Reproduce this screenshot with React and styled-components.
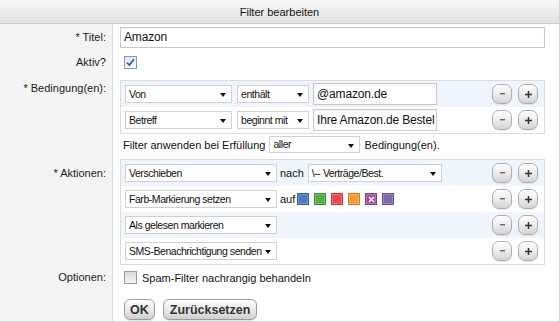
import React from 'react';
import styled, { createGlobalStyle } from 'styled-components';

const Global = createGlobalStyle`
  html, body { margin: 0; padding: 0; background: #fff; }
  body { font-family: "Liberation Sans", Arial, sans-serif; color: #111; }
  * { box-sizing: border-box; }
`;

const Frame = styled.div`
  width: 560px;
  height: 322px;
  border-right: 1px solid #d3d3d3;
  border-bottom: 1px solid #d3d3d3;
  display: flex;
  flex-direction: column;
  overflow: hidden;
`;

const Header = styled.div`
  height: 24px;
  flex: none;
  border-bottom: 1px solid #cdcdcd;
  background: linear-gradient(#f8f8f8, #e2e2e2);
  display: flex;
  align-items: center;
  justify-content: center;
  font-size: 11px;
  color: #111;
`;

const Form = styled.div`
  flex: 1;
  display: grid;
  grid-template-columns: 113px 1fr;
  grid-template-rows: 27px 22px 80px auto 25px 1fr;
`;

const Label = styled.div`
  background: #f4f4f4;
  border-right: 1px solid #dcdcdc;
  font-size: 11px;
  line-height: 13px;
  color: #1a1a1a;
  display: flex;
  justify-content: flex-end;
  align-items: ${p => (p.$top ? 'flex-start' : 'center')};
  padding: ${p => p.$pt || 0}px 6px 0 0;
`;

const Cell = styled.div`
  padding: ${p => p.$pt || 0}px 14px 0 7px;
  display: flex;
  flex-direction: column;
  justify-content: ${p => (p.$center ? 'center' : 'flex-start')};
`;

const TextInput = styled.div`
  height: ${p => p.$h || 21}px;
  width: ${p => (p.$w ? `${p.$w}px` : '100%')};
  flex: none;
  border: 1px solid #c8c8c8;
  box-shadow: inset 0 1px 1px rgba(0, 0, 0, 0.06);
  background: #fff;
  font-size: 12px;
  letter-spacing: -0.15px;
  line-height: ${p => (p.$h || 21) - 2}px;
  padding-left: 3px;
  color: #111;
  white-space: nowrap;
  overflow: hidden;
`;

const Line = styled.div`
  display: flex;
  align-items: center;
  gap: ${p => p.$gap || 0}px;
  margin-left: ${p => p.$ml || 0}px;
  margin-top: ${p => p.$mt || 0}px;
  font-size: 11px;
  color: #111;
`;

const Box = styled.div`
  border: 1px solid #dcdcdc;
  display: flex;
  flex-direction: column;
`;

const BoxRow = styled.div`
  height: 26px;
  display: flex;
  align-items: center;
  padding: 0 6px 0 4px;
  background: ${p => (p.$alt ? '#eef5fd' : '#fff')};
  font-size: 11px;
`;

const Select = styled.div`
  position: relative;
  flex: none;
  width: ${p => p.$w}px;
  height: ${p => p.$h || 18}px;
  margin-right: ${p => p.$mr || 0}px;
  border: 1px solid #d0d0d0;
  background: #fff;
  font-family: "Liberation Sans", Arial, sans-serif;
  font-size: 10.5px;
  letter-spacing: -0.45px;
  line-height: ${p => (p.$h || 18) - 2}px;
  padding-left: 3px;
  color: #111;
  white-space: nowrap;
  overflow: hidden;
  &::after {
    content: '';
    position: absolute;
    right: 5px;
    top: 50%;
    margin-top: -1px;
    border-left: 3.5px solid transparent;
    border-right: 3.5px solid transparent;
    border-top: 4px solid #111;
  }
`;

const Word = styled.span`
  margin: 0 ${p => p.$mr || 0}px 0 ${p => p.$ml || 0}px;
  font-size: 11px;
  color: #111;
`;

const Tools = styled.div`
  margin-left: auto;
  display: flex;
  gap: 6px;
`;

const RoundBtn = styled.div`
  width: 20px;
  height: 20px;
  border: 1px solid #adadad;
  border-radius: 7px;
  background: linear-gradient(#fefefe, #ececec 50%, #d4d4d4);
  box-shadow: inset 0 1px 0 #fff, 0 1px 1px rgba(0,0,0,0.08);
  display: flex;
  align-items: center;
  justify-content: center;
`;

const Swatches = styled.div`
  display: flex;
  gap: 5px;
  margin-left: 2px;
`;

const Swatch = styled.div`
  width: 12px;
  height: 12px;
  background: ${p => p.$c};
  border: 1px solid ${p => p.$b};
  box-shadow: inset 0 0 0 1px rgba(255,255,255,0.22);
  display: flex;
  align-items: center;
  justify-content: center;
`;

const CheckBox = styled.div`
  width: 13px;
  height: 13px;
  flex: none;
  border: 1px solid ${p => (p.$checked ? '#8799b3' : '#9c9c9c')};
  background: ${p => (p.$checked ? 'linear-gradient(#dfe6ef, #f7f9fc)' : 'linear-gradient(#d9d9d9, #f6f6f6)')};
  display: flex;
  align-items: center;
  justify-content: center;
`;

const Buttons = styled.div`
  display: flex;
  gap: 8px;
  margin-left: 4px;
`;

const Button = styled.div`
  height: 21px;
  padding: 0 ${p => p.$px || 6}px;
  border: 1px solid #9c9c9c;
  border-radius: 6px;
  background: linear-gradient(#fbfbfb, #e8e8e8 55%, #cfcfcf);
  box-shadow: inset 0 1px 0 #fff, 0 1px 1px rgba(0,0,0,0.1);
  font-size: 12.5px;
  font-weight: bold;
  color: #333;
  display: flex;
  align-items: center;
`;

const PlusMinus = () => (
  <Tools>
    <RoundBtn>
      <svg width="5" height="2" viewBox="0 0 5 2"><rect width="5" height="1.4" fill="#666" /></svg>
    </RoundBtn>
    <RoundBtn>
      <svg width="7" height="7" viewBox="0 0 7 7"><rect x="0" y="2.75" width="7" height="1.5" fill="#333" /><rect x="2.75" y="0" width="1.5" height="7" fill="#333" /></svg>
    </RoundBtn>
  </Tools>
);

const Check = () => (
  <svg width="9" height="9" viewBox="0 0 9 9">
    <path d="M1 4.6 L3.4 7 L8 1.2" stroke="#33507f" strokeWidth="1.6" fill="none" />
  </svg>
);

const colors = [
  ['#4a79bd', '#35609f'],
  ['#56ad46', '#3e8c31'],
  ['#e8474c', '#c33539'],
  ['#f39a3c', '#d47e24'],
  ['#a24fa3', '#813b83', true],
  ['#7f69ae', '#5f4f90'],
];

export default function App() {
  return (
    <>
      <Global />
      <Frame>
        <Header>Filter bearbeiten</Header>
        <Form>
          <Label>* Titel:</Label>
          <Cell $pt={3}>
            <TextInput>Amazon</TextInput>
          </Cell>

          <Label>Aktiv?</Label>
          <Cell $center>
            <Line $ml={4}>
              <CheckBox $checked><Check /></CheckBox>
            </Line>
          </Cell>

          <Label $top $pt={9}>* Bedingung(en):</Label>
          <Cell $pt={7}>
            <Box>
              <BoxRow $alt>
                <Select $w={107} $mr={5}>Von</Select>
                <Select $w={72} $mr={4}>enthält</Select>
                <TextInput $w={124} $h={22}>@amazon.de</TextInput>
                <PlusMinus />
              </BoxRow>
              <BoxRow>
                <Select $w={107} $mr={5}>Betreff</Select>
                <Select $w={72} $mr={4}>beginnt mit</Select>
                <TextInput $w={124} $h={22}>Ihre Amazon.de Bestel</TextInput>
                <PlusMinus />
              </BoxRow>
            </Box>
            <Line $ml={3} $mt={2} $gap={4}>
              <span>Filter anwenden bei Erfüllung</span>
              <Select $w={91} $h={17}>aller</Select>
              <span>Bedingung(en).</span>
            </Line>
          </Cell>

          <Label $top $pt={14}>* Aktionen:</Label>
          <Cell $pt={6}>
            <Box>
              <BoxRow $alt>
                <Select $w={152}>Verschieben</Select>
                <Word $ml={3} $mr={4}>nach</Word>
                <Select $w={134}>\-- Verträge/Best.</Select>
                <PlusMinus />
              </BoxRow>
              <BoxRow>
                <Select $w={152}>Farb-Markierung setzen</Select>
                <Word $ml={3}>auf</Word>
                <Swatches>
                  {colors.map(([c, b, x], i) => (
                    <Swatch key={i} $c={c} $b={b}>
                      {x && (
                        <svg width="7" height="7" viewBox="0 0 7 7">
                          <path d="M1 1 L6 6 M6 1 L1 6" stroke="#fff" strokeWidth="1.3" />
                        </svg>
                      )}
                    </Swatch>
                  ))}
                </Swatches>
                <PlusMinus />
              </BoxRow>
              <BoxRow $alt>
                <Select $w={152}>Als gelesen markieren</Select>
                <PlusMinus />
              </BoxRow>
              <BoxRow>
                <Select $w={152}>SMS-Benachrichtigung senden</Select>
                <PlusMinus />
              </BoxRow>
            </Box>
          </Cell>

          <Label>Optionen:</Label>
          <Cell $center>
            <Line $ml={4} $gap={5}>
              <CheckBox />
              <span>Spam-Filter nachrangig behandeln</span>
            </Line>
          </Cell>

          <Label />
          <Cell $pt={9}>
            <Buttons>
              <Button $px={5}>OK</Button>
              <Button $px={6}>Zurücksetzen</Button>
            </Buttons>
          </Cell>
        </Form>
      </Frame>
    </>
  );
}
